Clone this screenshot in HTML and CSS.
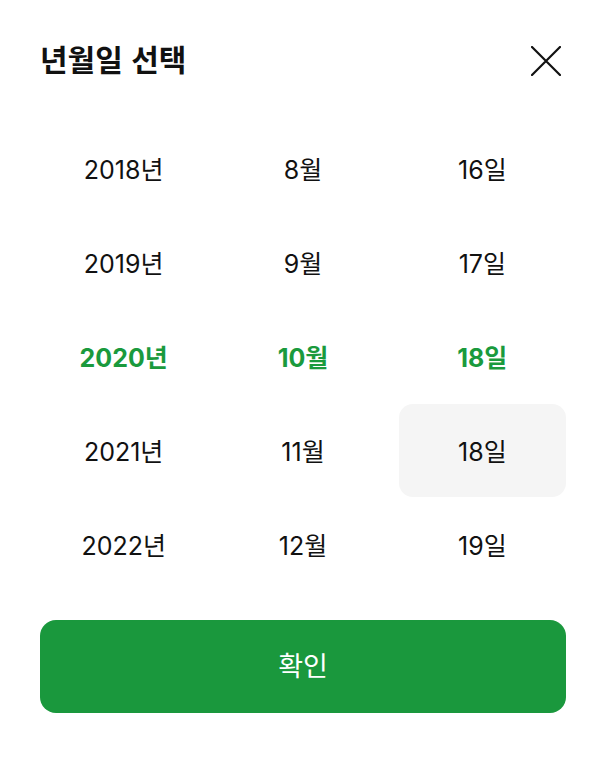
FILE: index.html
```html
<!DOCTYPE html>
<html lang="ko">
<head>
<meta charset="utf-8">
<link rel="stylesheet" href="styles.css">
</head>
<body>
<div class="sheet">
  <header class="header">
    <h1 class="title">년월일 선택</h1>
    <button class="close" aria-label="닫기">
      <svg width="30" height="30" viewBox="0 0 30 30"><path d="M1 1 L29 29 M29 1 L1 29" stroke="#111" stroke-width="2.2" stroke-linecap="round" fill="none"/></svg>
    </button>
  </header>
  <div class="grid">
    <div class="cell">2018년</div><div class="cell">8월</div><div class="cell">16일</div>
    <div class="cell">2019년</div><div class="cell">9월</div><div class="cell">17일</div>
    <div class="cell selected">2020년</div><div class="cell selected">10월</div><div class="cell selected">18일</div>
    <div class="cell">2021년</div><div class="cell">11월</div><div class="cell hover">18일</div>
    <div class="cell">2022년</div><div class="cell">12월</div><div class="cell">19일</div>
  </div>
  <button class="confirm">확인</button>
</div>
</body>
</html>
```

FILE: styles.css
```css
* { box-sizing: border-box; }
html, body { margin: 0; padding: 0; background: #fff; }
body {
  font-family: Inter, "Noto Sans CJK KR", sans-serif;
  color: #111;
}
.sheet {
  width: 607px;
  padding: 0 41px 0 40px;
}
.header {
  height: 122px;
  display: flex;
  align-items: center;
  justify-content: space-between;
}
.title {
  margin: 0 0 7px;
  font-family: "Noto Sans CJK KR", sans-serif;
  font-weight: 700;
  font-size: 30px;
  color: #111;
  line-height: 1;
}
.close {
  width: 40px;
  height: 40px;
  padding: 0;
  margin: 0;
  border: 0;
  background: transparent;
  display: flex;
  align-items: center;
  justify-content: center;
}
.grid {
  display: grid;
  grid-template-columns: repeat(3, 1fr);
  grid-auto-rows: 93px;
  column-gap: 12px;
  row-gap: 1px;
}
.cell {
  display: flex;
  align-items: center;
  justify-content: center;
  padding-top: 3px;
  font-size: 25px;
  line-height: 1;
  color: #111;
  border-radius: 14px;
}
.cell.selected {
  color: #1a9a3d;
  font-weight: 700;
}
.cell.hover {
  background: #f5f5f5;
}
.confirm {
  display: flex;
  align-items: center;
  justify-content: center;
  width: 100%;
  height: 93px;
  margin-top: 29px;
  border: 0;
  border-radius: 16px;
  background: #1a983d;
  color: #fff;
  font-family: Inter, "Noto Sans CJK KR", sans-serif;
  font-size: 27px;
  line-height: 1;
}
```
